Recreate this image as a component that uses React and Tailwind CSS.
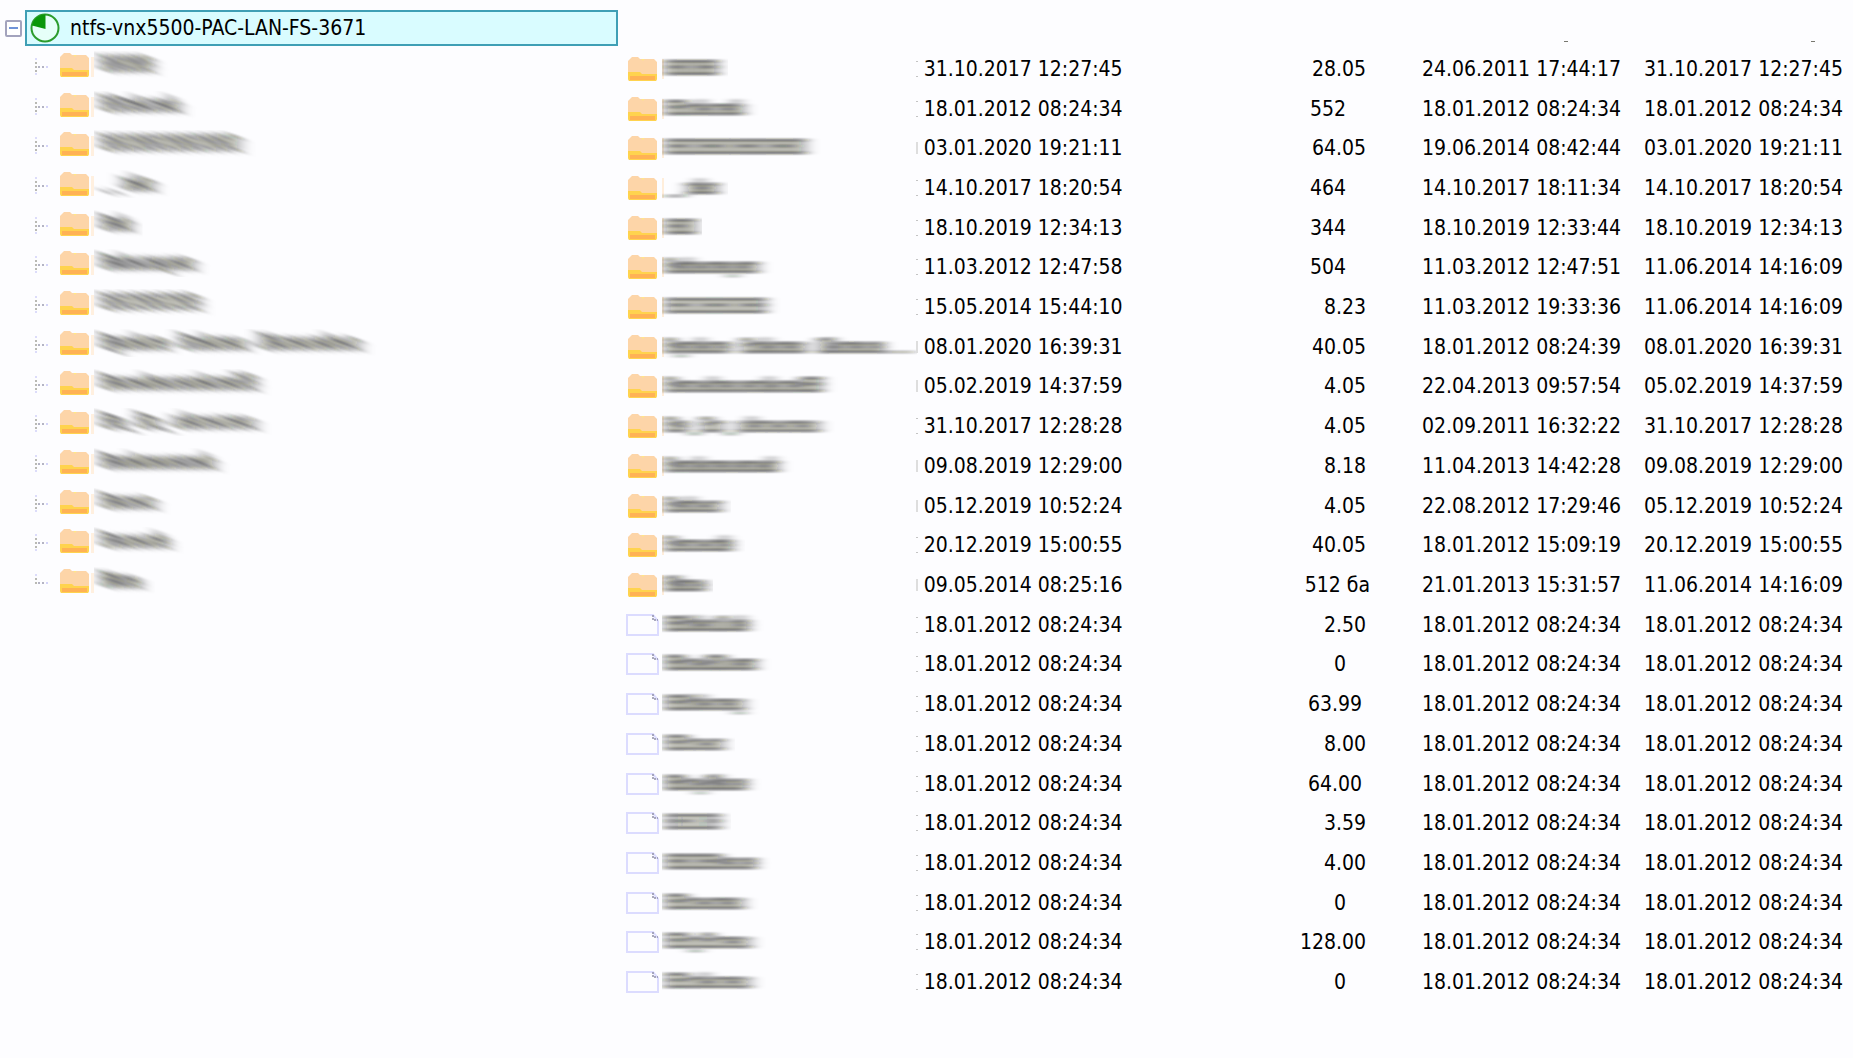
const X = 'CCCCC';

const tree = [
  { shape: X, w: 52 }, { shape: 'CCxlxxl', w: 80 }, { shape: 'CCCCCCCCCCCC', w: 140 },
  { shape: '__xlx', w: 54 }, { shape: 'Cxl', w: 31 }, { shape: 'Cxlxxxgxx', w: 94 },
  { shape: 'CCCCCCCC', w: 100 }, { shape: 'Cgxlxx Cxlxxx Clxxxxlxx', w: 260 },
  { shape: 'CxxxlxxxxlxxCC', w: 156 }, { shape: 'Cx_Cx_xlxxxxx', w: 156 },
  { shape: 'Cxxlxxxxxxl', w: 114 }, { shape: 'Cxxxx', w: 55 }, { shape: 'Cxxxxl', w: 68 },
  { shape: 'Clxx', w: 40 },
];

const Z = '18.01.2012 08:24:34';
const rows = [
  ['d', X, 54, '31.10.2017 12:27:45', '28.05', '24.06.2011 17:44:17', '31.10.2017 12:27:45'],
  ['d', 'CCxlxxl', 80, Z, '552', Z, Z],
  ['d', 'CCCCCCCCCCCC', 142, '03.01.2020 19:21:11', '64.05', '19.06.2014 08:42:44', '03.01.2020 19:21:11'],
  ['d', '__xlx', 54, '14.10.2017 18:20:54', '464', '14.10.2017 18:11:34', '14.10.2017 18:20:54'],
  ['d', 'CCC', 32, '18.10.2019 12:34:13', '344', '18.10.2019 12:33:44', '18.10.2019 12:34:13'],
  ['d', 'Cxlxxxgxx', 94, '11.03.2012 12:47:58', '504', '11.03.2012 12:47:51', '11.06.2014 14:16:09'],
  ['d', 'CCCCCCCC', 102, '15.05.2014 15:44:10', '8.23', '11.03.2012 19:33:36', '11.06.2014 14:16:09'],
  ['d', 'Cgxlxx Cxlxxx Clxxxx...', 252, '08.01.2020 16:39:31', '40.05', '18.01.2012 08:24:39', '08.01.2020 16:39:31'],
  ['d', 'CxxxlxxxxlxxCC', 158, '05.02.2019 14:37:59', '4.05', '22.04.2013 09:57:54', '05.02.2019 14:37:59'],
  ['d', 'Cx_Cx_xlxxxxx', 156, '31.10.2017 12:28:28', '4.05', '02.09.2011 16:32:22', '31.10.2017 12:28:28'],
  ['d', 'Cxxlxxxxxxl', 114, '09.08.2019 12:29:00', '8.18', '11.04.2013 14:42:28', '09.08.2019 12:29:00'],
  ['d', 'Cxlxx', 57, '05.12.2019 10:52:24', '4.05', '22.08.2012 17:29:46', '05.12.2019 10:52:24'],
  ['d', 'Cxxxxl', 68, '20.12.2019 15:00:55', '40.05', '18.01.2012 15:09:19', '20.12.2019 15:00:55'],
  ['d', 'Clxx', 41, '09.05.2014 08:25:16', '512 ба', '21.01.2013 15:31:57', '11.06.2014 14:16:09'],
  ['f', 'CCllxCxl', 84, Z, '2.50', Z, Z],
  ['f', 'CCxxCCxxx', 92, Z, '0', Z, Z],
  ['f', 'CCllxxg', 81, Z, '63.99', Z, Z],
  ['f', 'CCxxx', 60, Z, '8.00', Z, Z],
  ['f', 'CCxgClxx', 82, Z, '64.00', Z, Z],
  ['f', 'CCCC', 57, Z, '3.59', Z, Z],
  ['f', 'CCCCCxxx', 92, Z, '4.00', Z, Z],
  ['f', 'CCxxxxx', 80, Z, '0', Z, Z],
  ['f', 'CCgCxxx', 87, Z, '128.00', Z, Z],
  ['f', 'CCxlxxx', 87, Z, '0', Z, Z],
];

function strokes(shape, width) {
  const step = width / shape.length;
  const out = [];
  [...shape].forEach((c, i) => {
    const x = i * step;
    const w = step * 0.75;
    const bar = (y, h = 2, o = 0.9) => out.push([x, y, w, h, o]);
    const stem = (y, h, dx = 0) => out.push([x + dx, y, 2, h, 0.9]);
    if (c === ' ') return;
    if (c === '_') return bar(21, 2, 0.7);
    if (c === '.') return out.push([x, 18, 5, 2, 0.9]);
    if (c === 'C') {
      bar(5); bar(18);
      if (i % 3 !== 2) bar(11, 2, 0.7);
      stem(5, 15); stem(7, 11, w - 2);
      return;
    }
    bar(9, 2, i % 3 ? 0.9 : 0.5); bar(18, 2, 0.8);
    if (i % 2) bar(13, 2, 0.8);
    stem(9, 11); stem(10, 9, w - 2);
    if (c === 'l') { stem(4, 16); out.push([x, 5, w / 2, 2, 0.6]); }
    if (c === 'g') out.push([x, 22, w, 2, 0.7]);
  });
  return out;
}

/* Redacted file name: letter-like strokes smeared along one direction */
function Smudge({ shape, width, slanted }) {
  const k = slanted ? 0.32 : 0;
  const shift = slanted ? 8 : 4;
  return (
    <svg aria-hidden="true" width={width + 24} height="28" viewBox={`0 0 ${width + 24} 28`} className="shrink-0">
      <g transform={`matrix(1 ${k} 0 1 0 0)`}>
        <g filter={slanted ? 'url(#smear-slanted)' : 'url(#smear-flat)'}>
          {strokes(shape, width).map(([x, y, w, h, o], i) => (
            <rect key={i} x={x + shift} y={y - k * (x + shift + w / 2)} width={w} height={h} fill="#161712" opacity={o} />
          ))}
        </g>
      </g>
    </svg>
  );
}

function Folder() {
  return (
    <svg aria-hidden="true" width="29" height="24" viewBox="0 0 29 24" className="shrink-0">
      <path d="M0 4 L4 0 H10 L12 2 H26 L29 5 V22 L28 24 H1 L0 22 Z" fill="#fdd5a8" />
      <path d="M0 15 H12 L14 17 H29 V22 L28 24 H1 L0 22 Z" fill="#ffd34e" />
      <path d="M2 19 H27 V23 H2 Z" fill="#ffb255" />
      <path d="M14 2 L15 4 L16 2 Z" fill="#fff07a" />
    </svg>
  );
}

function FileIcon() {
  return (
    <svg aria-hidden="true" width="33" height="22" viewBox="0 0 33 22" className="shrink-0">
      <path d="M1 1 H27 L32 7 V21 H1 Z" fill="#fdfdff" stroke="#dcdcff" strokeWidth="2" />
      <path d="M27 1 V6 H32" fill="none" stroke="#8f8fa8" strokeWidth="1.500" strokeDasharray="2 1" />
    </svg>
  );
}

function Branch({ last }) {
  return (
    <svg aria-hidden="true" width="14" height="18" viewBox="0 0 14 18" className="shrink-0">
      {[1, 5, 9, 13, 16].slice(0, last ? 3 : 5).map((y, i) => (
        <rect key={y} x="1" y={y} width="2" height="2" fill={i % 4 ? '#b9b9b4' : '#dcdcfa'} />
      ))}
      {[4, 8, 12].map((x) => (
        <rect key={x} x={x} y="9" width="2" height="2" fill={x === 12 ? '#d4d4f8' : '#b4b4c4'} />
      ))}
    </svg>
  );
}

function Pie() {
  return (
    <svg aria-hidden="true" width="30" height="30" viewBox="0 0 30 30" className="shrink-0">
      <circle cx="15" cy="15" r="13.500" fill="#e6fff8" stroke="#2c9c2c" strokeWidth="2" />
      <path d="M15.500 16 V1.500 A13.500 13.500 0 0 0 2 12.500 Z" fill="#0a970a" />
    </svg>
  );
}

function sizePadding(size) {
  if (size.includes(' ')) return 'pr-0';
  if (!size.includes('.')) return 'pr-6';
  return size === '63.99' || size === '64.00' ? 'pr-2' : 'pr-1';
}

export default function App() {
  return (
    <main className="flex min-h-screen items-start overflow-hidden bg-[#fdfdff] font-['DejaVu_Sans_Condensed','DejaVu_Sans',sans-serif] text-[21px] leading-6 text-black">
      <svg aria-hidden="true" width="0" height="0" className="absolute">
        <filter id="smear-flat" x="-20%" y="-30%" width="140%" height="160%">
          <feGaussianBlur stdDeviation="7 1" />
        </filter>
        <filter id="smear-slanted" x="-40%" y="-50%" width="180%" height="200%">
          <feGaussianBlur stdDeviation="7 1" />
        </filter>
      </svg>

      <nav className="w-1/3 shrink-0 pt-[10px]">
        <div className="flex items-center gap-[3px] pl-[5px]">
          <button type="button" aria-label="Collapse" className="flex size-[17px] shrink-0 items-center justify-center rounded-xs border-2 border-[#a3a3bd] bg-white">
            <span className="h-[2px] w-[9px] bg-[#6f93d8]" />
          </button>
          <button type="button" className="flex h-9 flex-1 items-center gap-[10px] border-2 border-[#3f9fb5] bg-[#d9fcff] pl-[3px] text-left">
            <Pie />
            <span>ntfs-vnx5500-PAC-LAN-FS-3671</span>
          </button>
        </div>
        <ul className="grid h-[556px] auto-rows-fr">
          {tree.map((t, i) => (
            <li key={i} className="flex items-center pl-[34px]">
              <Branch last={i === tree.length - 1} />
              <span className="flex items-center pb-[2px] pl-3">
                <Folder />
                <span className="mt-1 ml-[2px] h-5 w-[3px] bg-[#fff0e0]" />
                <Smudge shape={t.shape} width={t.w} slanted />
              </span>
            </li>
          ))}
        </ul>
      </nav>

      <div className="min-w-0 flex-1 pt-px pl-2">
        <table className="h-[1001px] w-full table-fixed border-collapse whitespace-nowrap">
          <colgroup>
            <col className="w-[291px]" />
            <col className="w-[206px]" />
            <col />
            <col className="w-[264px]" />
            <col className="w-[219px]" />
          </colgroup>
          <thead>
            <tr className="h-12">
              <td colSpan={3} />
              <td className="p-0 pt-8 pl-[194px]"><div className="h-px w-1 bg-[#77776f]" /></td>
              <td className="p-0 pt-8 pl-[177px]"><div className="h-px w-1 bg-[#77776f]" /></td>
            </tr>
          </thead>
          <tbody>
            {rows.map(([kind, shape, w, modified, size, created, accessed], i) => (
              <tr key={i}>
                <td className="p-0">
                  <div className="flex items-center overflow-hidden">
                    <span className="flex w-9 shrink-0 items-center">
                      {kind === 'd' ? <span className="pl-[2px]"><Folder /></span> : <FileIcon />}
                    </span>
                    {kind === 'd' && <span className="-mr-[2px] h-5 w-[2px] shrink-0 bg-[#ffeedb]" />}
                    <Smudge shape={shape} width={w} />
                  </div>
                </td>
                <td className="p-0">
                  <div className="flex items-center gap-[6px]">
                    <span className={modified[0] === '0' ? '-ml-px h-3 w-[2px] bg-[#dedede]' : '-ml-px h-4 w-[2px] border-y border-[#c4c4c4]'} />
                    {modified}
                  </div>
                </td>
                <td className={`p-0 text-right ${sizePadding(size)}`}>{size}</td>
                <td className="p-0 pl-[52px]">{created}</td>
                <td className="p-0 pl-[10px]">{accessed}</td>
              </tr>
            ))}
          </tbody>
        </table>
      </div>
    </main>
  );
}
